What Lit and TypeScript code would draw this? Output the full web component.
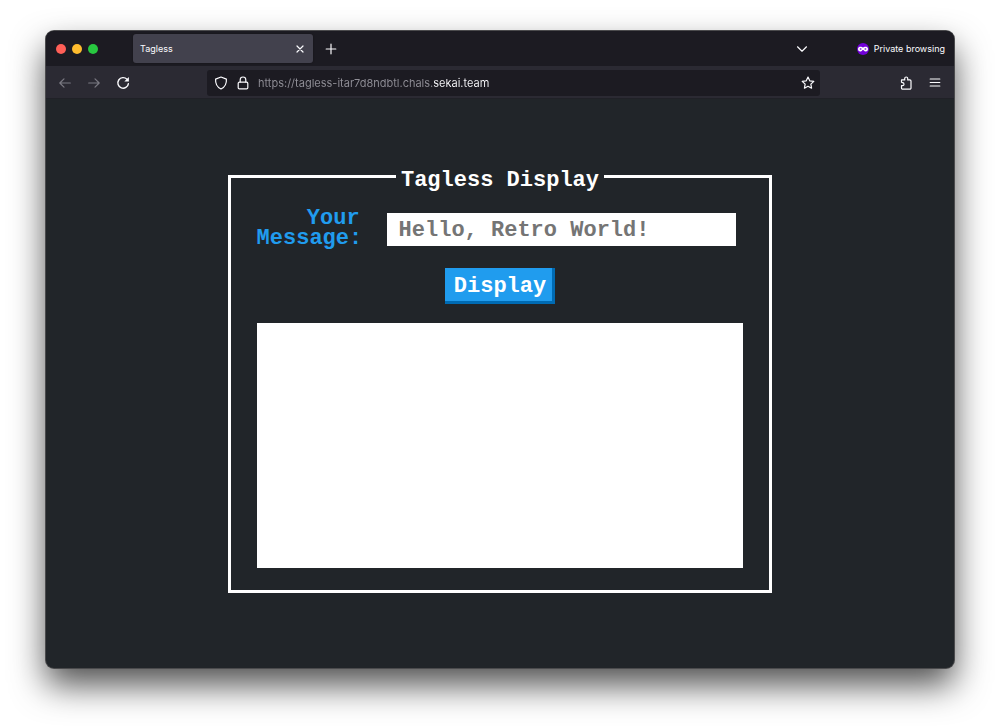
import { LitElement, html, css } from "lit";
import { customElement, state } from "lit/decorators.js";

@customElement("browser-toolbar")
class BrowserToolbar extends LitElement {
  static styles = css`
    :host { display: block; font-family: Inter, "Liberation Sans", sans-serif; color: #fbfbfe; }
    * { box-sizing: border-box; }
    button { display: grid; place-items: center; padding: 0; border: 0; background: none; color: inherit; font: inherit; }
    svg { display: block; fill: none; stroke: currentColor; stroke-width: 1.2; stroke-linecap: round; stroke-linejoin: round; }
    .tabs { display: flex; align-items: center; height: 35px; padding: 0 9px 0 10px; background: #1c1b22; }
    .lights { display: flex; gap: 6px; width: 77px; }
    .light { width: 10px; height: 10px; border-radius: 50%; }
    .close { background: #ff5f57; }
    .minimise { background: #febc2e; }
    .expand { background: #28c840; }
    .tab { display: flex; align-items: center; justify-content: space-between; width: 180px; height: 29px; padding: 0 8px 0 7px; border-radius: 3px; background: #42414d; font-size: 9px; box-shadow: 0 0 2px #00000066; }
    .new-tab { margin-left: 12px; }
    .list-tabs { margin-left: auto; }
    .private { display: flex; align-items: center; gap: 5px; margin-left: 49px; font-size: 9px; }
    .nav { display: grid; grid-template-columns: 161px minmax(0, 1fr) 134px; align-items: center; height: 33px; padding-top: 1px; background: #2b2a33; border-bottom: 1px solid #202127; }
    .history { display: flex; gap: 15px; padding-left: 12px; }
    .history button:disabled { color: #7b7a83; }
    .address { display: flex; align-items: center; gap: 8px; height: 26px; padding: 0 5px 0 7px; border-radius: 3px; background: #1c1b22; }
    .url { flex: 1; min-width: 0; height: 24px; padding: 0; border: 0; outline: 0; font: 11px/24px Inter, "Liberation Sans", sans-serif; color: #fbfbfe; background: linear-gradient(90deg, #908f97 175px, #fbfbfe 175px); -webkit-background-clip: text; background-clip: text; -webkit-text-fill-color: transparent; }
    .tools { display: flex; justify-content: flex-end; gap: 15px; padding-right: 12px; }
  `;

  render() {
    return html`
      <div class="tabs">
        <div class="lights"><span class="light close"></span><span class="light minimise"></span><span class="light expand"></span></div>
        <div class="tab">
          <span>Tagless</span>
          <button aria-label="Close tab"><svg width="10" height="10" viewBox="0 0 10 10"><path d="M2 2l6 6M8 2L2 8" /></svg></button>
        </div>
        <button class="new-tab" aria-label="New tab"><svg width="12" height="12" viewBox="0 0 12 12"><path d="M6 1.200v9.600M1.200 6h9.600" /></svg></button>
        <button class="list-tabs" aria-label="List all tabs"><svg width="12" height="12" viewBox="0 0 12 12"><path d="M1.500 3.800L6 8.200l4.500-4.400" /></svg></button>
        <div class="private">
          <svg width="12" height="12" viewBox="0 0 12 12"><circle cx="6" cy="6" r="6" fill="#7100d8" stroke="none" /><path d="M6 4.800C4.800 3.400 1 3.300 1 6c0 3 3.200 3 4.200 1.400.3-.5 1.300-.5 1.600 0C7.800 9 11 9 11 6c0-2.700-3.800-2.600-5-1.200z" fill="#fff" stroke="none" /><path d="M2.500 6.100c.5-1.100 1.700-.9 2.300 0-.7.9-1.800.9-2.300 0zM9.500 6.100c-.5-1.100-1.700-.9-2.300 0 .7.900 1.800.9 2.300 0z" fill="#7100d8" stroke="none" /></svg>
          <span>Private browsing</span>
        </div>
      </div>
      <div class="nav">
        <div class="history">
          <button disabled aria-label="Back"><svg width="14" height="14" viewBox="0 0 14 14"><path d="M12.300 7H1.800M6 2.800L1.800 7 6 11.200" /></svg></button>
          <button disabled aria-label="Forward"><svg width="14" height="14" viewBox="0 0 14 14"><path d="M1.700 7h10.500M8 2.800L12.200 7 8 11.200" /></svg></button>
          <button aria-label="Reload"><svg width="14" height="14" viewBox="0 0 14 14"><path d="M12.400 7.600A5.300 5.300 0 1 1 11 3.300" stroke-width="1.400" /><path d="M12.900 1v4.600H8.300z" fill="currentColor" stroke="none" /></svg></button>
        </div>
        <div class="address">
          <button aria-label="Tracking protection"><svg width="14" height="14" viewBox="0 0 14 14"><path d="M7 1l5.400 2.100c.3 4.200-1.400 8-5.400 9.900C3 11.100 1.300 7.300 1.600 3.100z" /></svg></button>
          <button aria-label="Site information"><svg width="14" height="14" viewBox="0 0 14 14"><rect x="2.200" y="6.200" width="9.600" height="6.700" rx="1.200" /><path d="M4.200 6V3.800a2.800 2.800 0 0 1 5.600 0V6" /></svg></button>
          <input class="url" aria-label="Address" value="https://tagless-itar7d8ndbtl.chals.sekai.team" />
          <button aria-label="Bookmark"><svg width="14" height="14" viewBox="0 0 14 14"><path d="M7 1.100l1.750 3.700 4.050.55-2.950 2.800.72 4.050L7 10.250 3.430 12.200l.72-4.050L1.200 5.350l4.050-.55z" /></svg></button>
        </div>
        <div class="tools">
          <button aria-label="Extensions"><svg width="14" height="14" viewBox="0 0 14 14"><path d="M2.500 6.200V3.900h3.200V2.500a1.500 1.500 0 0 1 3 0v1.400h2.100a1.200 1.200 0 0 1 1.200 1.200v6.900a1.200 1.200 0 0 1-1.200 1.200H3.700a1.200 1.200 0 0 1-1.200-1.200V9.700h1a1.500 1.500 0 0 0 0-3z" /></svg></button>
          <button aria-label="Menu"><svg width="14" height="14" viewBox="0 0 14 14"><path d="M2.200 3h9.600M2.200 6.500h9.600M2.200 10h9.600" /></svg></button>
        </div>
      </div>
    `;
  }
}

@customElement("app-root")
class AppRoot extends LitElement {
  static styles = css`
    :host { display: block; background: #fff; }
    * { box-sizing: border-box; }
    .desktop { display: flex; min-height: 100vh; padding: 31px 46px 60px; overflow: hidden; }
    .window { display: flex; flex-direction: column; flex: 1; min-width: 0; border-radius: 8px; overflow: hidden; background: #212529; box-shadow: 0 0 0 1px #4b4b4d, 0 17px 34px #000000b0; }
    .page { flex: 1; padding: 62px 0 24px; font: bold 22px/20px "Liberation Mono", monospace; color: #fff; }
    .panel { width: 60%; min-width: 0; margin: 0 auto; padding: 18px 26px 22px; border: 3px solid #fff; }
    .title { margin: 0 auto; padding: 10px 5px 0; }
    .form { display: flex; flex-direction: column; gap: 19px; margin: 0; }
    .row { display: grid; grid-template-columns: 103px minmax(0, 1fr); align-items: center; gap: 27px; padding-right: 7px; }
    .label { text-align: right; color: #209cee; }
    .message { width: 100%; height: 33px; padding: 2px 12px 0; border: 0; border-radius: 0; font: inherit; color: #212529; background: #fff; }
    .message::placeholder { color: #757575; opacity: 1; }
    .submit { align-self: center; height: 36px; padding: 2px 9px 0; border: 0; font: inherit; color: #fff; background: #209cee; box-shadow: inset -3px -3px #006bb3; }
    .result { display: block; height: 245px; overflow: auto; padding: 8px; background: #fff; color: #212529; }
  `;

  @state() shown = "";

  show(event: Event) {
    event.preventDefault();
    this.shown = (this.renderRoot.querySelector("#message") as HTMLInputElement).value;
  }

  render() {
    return html`
      <div class="desktop">
        <div class="window">
          <browser-toolbar></browser-toolbar>
          <main class="page">
            <fieldset class="panel">
              <legend class="title">Tagless Display</legend>
              <form class="form" @submit=${this.show}>
                <div class="row">
                  <label class="label" for="message">Your Message:</label>
                  <input class="message" id="message" type="text" placeholder="Hello, Retro World!" />
                </div>
                <button class="submit" type="submit">Display</button>
                <output class="result" for="message">${this.shown}</output>
              </form>
            </fieldset>
          </main>
        </div>
      </div>
    `;
  }
}
